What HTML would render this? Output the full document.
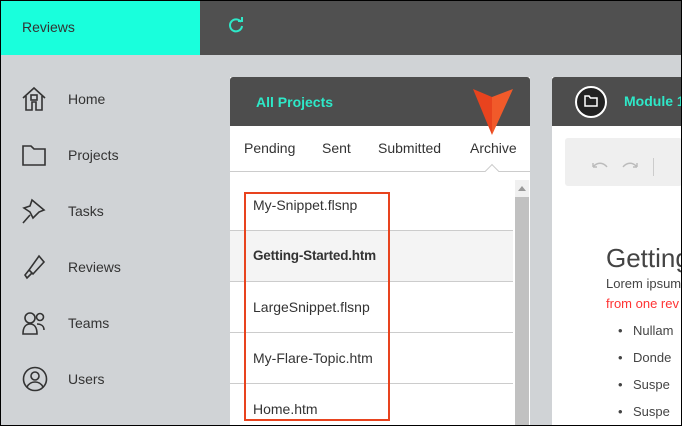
<!DOCTYPE html>
<html><head><style>
*{margin:0;padding:0;box-sizing:border-box}
html,body{width:682px;height:426px;overflow:hidden}
body{font-family:"Liberation Sans",sans-serif;background:#d0d3d6;position:relative}
.a{position:absolute}
.nav{font-size:14px;color:#333}
</style></head><body>
<div class="a" style="left:0;top:0;width:200px;height:55px;background:#19ffdc"></div>
<div class="a" style="left:200px;top:0;width:482px;height:55px;background:#505050"></div>
<div class="a" style="left:22px;top:19px;font-size:14px;color:#333">Reviews</div>
<svg class="a" style="left:227px;top:16px" width="18" height="18" viewBox="0 0 18 18"><path d="M14 6A6 6 0 1 0 15 10" fill="none" stroke="#2ee8c8" stroke-width="2"/><path d="M11 5h4V1" fill="none" stroke="#2ee8c8" stroke-width="2"/></svg>

<svg class="a" style="left:22px;top:86px" width="24" height="26" viewBox="0 0 24 26" fill="none" stroke="#333" stroke-width="1.6"><path d="M1 12L12 2l11 10M4 10v14h6v-8h4v8h6V10"/><rect x="9" y="9" width="6" height="5"/></svg>
<div class="a nav" style="left:68px;top:91px">Home</div>
<svg class="a" style="left:22px;top:144px" width="24" height="22" viewBox="0 0 24 22" fill="none" stroke="#333" stroke-width="1.6"><path d="M1 2h8l3 3h11v16H1z"/></svg>
<div class="a nav" style="left:68px;top:147px">Projects</div>
<svg class="a" style="left:22px;top:198px" width="24" height="26" viewBox="0 0 24 26" fill="none" stroke="#333" stroke-width="1.6"><path d="M10 2l12 10-5 2-6 6-3-6-6-4 6-2zM8 17l-7 8"/></svg>
<div class="a nav" style="left:68px;top:203px">Tasks</div>
<svg class="a" style="left:22px;top:254px" width="24" height="26" viewBox="0 0 24 26" fill="none" stroke="#333" stroke-width="1.6"><path d="M17 2l5 6-11 12-4-4zM7 16l-4 5 2 3 5-5"/></svg>
<div class="a nav" style="left:68px;top:259px">Reviews</div>
<svg class="a" style="left:22px;top:310px" width="24" height="26" viewBox="0 0 24 26" fill="none" stroke="#333" stroke-width="1.6"><circle cx="8" cy="8" r="5"/><circle cx="18" cy="7" r="3.5"/><path d="M1 24c0-7 3-10 7-10s7 3 7 10zM15 14c4 0 7 2 7 6"/></svg>
<div class="a nav" style="left:68px;top:315px">Teams</div>
<svg class="a" style="left:22px;top:366px" width="26" height="26" viewBox="0 0 26 26" fill="none" stroke="#333" stroke-width="1.6"><circle cx="13" cy="13" r="11.5"/><circle cx="13" cy="10" r="4"/><path d="M5 21c2-4 5-5 8-5s6 1 8 5"/></svg>
<div class="a nav" style="left:68px;top:371px">Users</div>

<div class="a" style="left:230px;top:77px;width:300px;height:350px;background:#fff"></div>
<div class="a" style="left:230px;top:77px;width:300px;height:49px;background:#4d4d4d;border-radius:3px 3px 0 0"></div>
<div class="a" style="left:256px;top:94px;font-size:14px;font-weight:bold;color:#2ee8c8">All Projects</div>
<div class="a" style="left:230px;top:171px;width:300px;height:1px;background:#ccc"></div>
<div class="a" style="left:244px;top:140px;font-size:14px;color:#333">Pending</div>
<div class="a" style="left:322px;top:140px;font-size:14px;color:#333">Sent</div>
<div class="a" style="left:378px;top:140px;font-size:14px;color:#333">Submitted</div>
<div class="a" style="left:470px;top:140px;font-size:14px;color:#333">Archive</div>
<div class="a" style="left:487px;top:166px;width:10px;height:10px;background:#fff;border-left:1px solid #ccc;border-top:1px solid #ccc;transform:rotate(45deg)"></div>
<svg class="a" style="left:472px;top:88px" width="42" height="48" viewBox="0 0 42 48"><path d="M1 1L20 9 20 47z" fill="#e8431e"/><path d="M20 9L41 1 20 47z" fill="#f15a2a"/></svg>

<div class="a" style="left:230px;top:230px;width:283px;height:51px;background:#f4f4f4"></div>
<div class="a" style="left:230px;top:230px;width:283px;height:1px;background:#ccc"></div>
<div class="a" style="left:230px;top:281px;width:283px;height:1px;background:#ccc"></div>
<div class="a" style="left:230px;top:332px;width:283px;height:1px;background:#ccc"></div>
<div class="a" style="left:230px;top:383px;width:283px;height:1px;background:#ccc"></div>
<div class="a" style="left:253px;top:197px;font-size:14px;color:#333">My-Snippet.flsnp</div>
<div class="a" style="left:253px;top:248px;font-size:13.5px;color:#333;font-weight:bold;letter-spacing:-0.2px">Getting-Started.htm</div>
<div class="a" style="left:253px;top:299px;font-size:14px;color:#333">LargeSnippet.flsnp</div>
<div class="a" style="left:253px;top:350px;font-size:14px;color:#333">My-Flare-Topic.htm</div>
<div class="a" style="left:253px;top:401px;font-size:14px;color:#333">Home.htm</div>
<div class="a" style="left:244px;top:192px;width:146px;height:229px;border:2px solid #e8431e"></div>
<div class="a" style="left:515px;top:180px;width:14px;height:246px;background:#f0f0f0"></div>
<div class="a" style="left:515px;top:197px;width:14px;height:229px;background:#c1c1c1"></div>
<div class="a" style="left:518px;top:186px;width:0;height:0;border-left:4px solid transparent;border-right:4px solid transparent;border-bottom:5px solid #999"></div>

<div class="a" style="left:552px;top:77px;width:130px;height:350px;background:#fff"></div>
<div class="a" style="left:552px;top:77px;width:130px;height:49px;background:#4d4d4d;border-radius:3px 0 0 0"></div>
<div class="a" style="left:575px;top:86px;width:32px;height:32px;border-radius:50%;background:#222;border:2px solid #fff"></div>
<svg class="a" style="left:584px;top:95px" width="14" height="12" viewBox="0 0 14 12"><path d="M1 1h4l1.5 2H13v8H1z" fill="none" stroke="#fff" stroke-width="1.5"/></svg>
<div class="a" style="left:624px;top:93px;font-size:14px;font-weight:bold;color:#2ee8c8;white-space:nowrap">Module 1</div>
<div class="a" style="left:565px;top:138px;width:117px;height:48px;background:#efefef;border-radius:3px"></div>
<svg class="a" style="left:590px;top:158px" width="50" height="12" viewBox="0 0 50 12" fill="none" stroke="#bbb" stroke-width="1.4"><path d="M3 9c4-5 10-5 14 0M3 9V5M3 9h4M47 9c-4-5-10-5-14 0M47 9V5M47 9h-4"/></svg>
<div class="a" style="left:653px;top:158px;width:1px;height:18px;background:#ccc"></div>
<div class="a" style="left:606px;top:243px;font-size:26px;color:#444;white-space:nowrap">Getting</div>
<div class="a" style="left:606px;top:276px;font-size:13px;color:#444;white-space:nowrap">Lorem ipsum</div>
<div class="a" style="left:606px;top:296px;font-size:13px;color:#f33;white-space:nowrap">from one rev</div>
<div class="a" style="left:633px;top:317px;font-size:13px;color:#444;white-space:nowrap;line-height:27px">Nullam<br>Donde<br>Suspe<br>Suspe</div>
<div class="a" style="left:618px;top:317px;font-size:13px;color:#444;line-height:27px">•<br>•<br>•<br>•</div>
<div class="a" style="left:0;top:0;width:682px;height:426px;border:1px solid #000"></div>
</body></html>
